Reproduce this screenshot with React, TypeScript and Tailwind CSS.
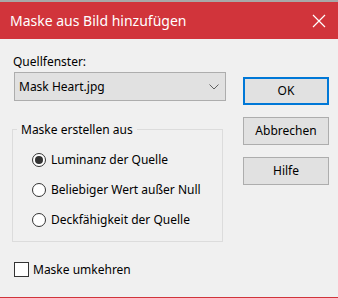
import React from "react";

const font = { fontFamily: '"Noto Sans", "Liberation Sans", sans-serif' };

function Radio({ checked, label }: { checked?: boolean; label: string }) {
  return (
    <div className="flex items-center h-[30px]">
      <div className="w-[14px] h-[14px] rounded-full border border-[#333333] bg-white flex items-center justify-center">
        {checked && <div className="w-[8px] h-[8px] rounded-full bg-[#333333]" />}
      </div>
      <span className="ml-[5px] text-[12px] text-black leading-none">{label}</span>
    </div>
  );
}

function Btn({ label, primary }: { label: string; primary?: boolean }) {
  return (
    <div
      className={
        "w-[86px] h-[28px] bg-[#e1e1e1] flex items-center justify-center text-[12px] text-black " +
        (primary ? "border-2 border-[#0078d7]" : "border border-[#adadad]")
      }
    >
      {label}
    </div>
  );
}

export default function App() {
  return (
    <div className="w-[338px] h-[298px] bg-[#f0f0f0] flex flex-col border-b border-[#d1343b]" style={font}>
      <div className="h-[39px] bg-[#d1343b] border-t-2 border-[#a8a8a8] flex items-center justify-between pl-[10px] pr-[12px]">
        <span className="text-white text-[14px] leading-none">Maske aus Bild hinzufügen</span>
        <svg width="14" height="14" viewBox="0 0 14 14">
          <path d="M1 1 L13 13 M13 1 L1 13" stroke="white" strokeWidth="1.2" />
        </svg>
      </div>
      <div className="flex flex-1">
        <div className="pl-[12px] w-[228px] flex flex-col">
          <div className="pl-[1px] mt-[14px] text-[12px] text-black leading-[17px]">Quellfenster:</div>
          <div className="ml-[2px] mt-[2px] w-[212px] h-[29px] bg-[#e1e1e1] border border-[#adadad] flex items-center justify-between pl-[4px] pr-[6px]">
            <span className="text-[12px] text-black">Mask Heart.jpg</span>
            <svg width="10" height="6" viewBox="0 0 10 6">
              <path d="M0.5 0.5 L5 5 L9.5 0.5" stroke="#606060" fill="none" strokeWidth="1" />
            </svg>
          </div>
          <fieldset className="mt-[20px] w-[211px] h-[121px] border border-[#dcdcdc] pl-[4px]">
            <legend className="px-[4px] text-[12px] text-black leading-[17px]">Maske erstellen aus</legend>
            <div className="pl-[15px] pt-[7px]">
              <Radio checked label="Luminanz der Quelle" />
              <Radio label="Beliebiger Wert außer Null" />
              <Radio label="Deckfähigkeit der Quelle" />
            </div>
          </fieldset>
          <div className="flex items-center mt-[20px] ml-[2px]">
            <div className="w-[15px] h-[15px] border border-[#333333] bg-white" />
            <span className="ml-[4px] text-[12px] text-black leading-none">Maske umkehren</span>
          </div>
        </div>
        <div className="ml-[15px] mt-[38px] flex flex-col gap-[12px]">
          <Btn label="OK" primary />
          <Btn label="Abbrechen" />
          <Btn label="Hilfe" />
        </div>
      </div>
    </div>
  );
}
